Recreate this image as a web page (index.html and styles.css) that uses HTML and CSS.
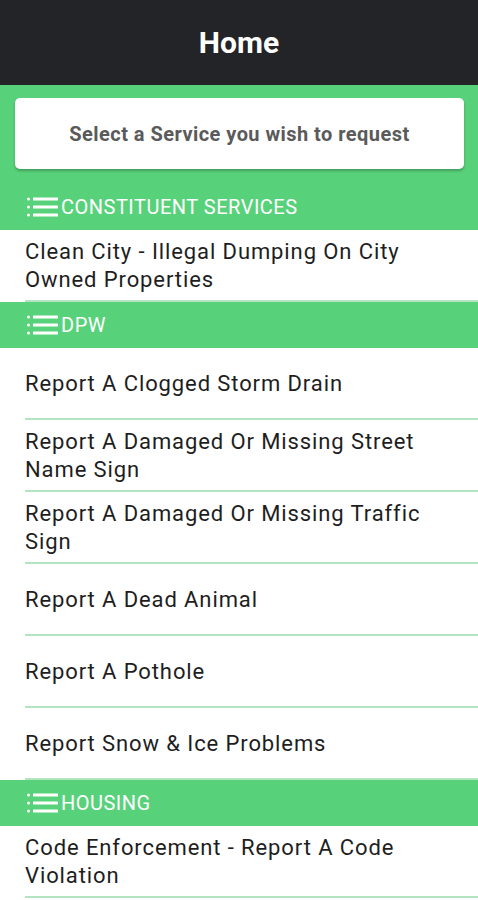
FILE: index.html
```html
<!DOCTYPE html>
<html lang="en">
<head>
  <meta charset="UTF-8">
  <meta name="viewport" content="width=device-width,initial-scale=1.0">
  <title>Home</title>
  <link rel="stylesheet" href="styles.css">
</head>
<body>
  <header class="topbar">Home</header>

  <div class="intro">
    <div class="intro-card">Select a Service you wish to request</div>
  </div>

  <div class="section">
    <div class="section-title">
      <svg class="list-icon" viewBox="0 0 31 20" width="31" height="20">
        <rect x="0" y="0.5" width="3" height="3" rx="1.5"/>
        <rect x="0" y="8.5" width="3" height="3" rx="1.5"/>
        <rect x="0" y="16.5" width="3" height="3" rx="1.5"/>
        <rect x="6" y="0.5" width="25" height="3" rx="0.5"/>
        <rect x="6" y="8.5" width="25" height="3" rx="0.5"/>
        <rect x="6" y="16.5" width="25" height="3" rx="0.5"/>
      </svg>
      <span>CONSTITUENT SERVICES</span>
    </div>
    <div class="item">Clean City - Illegal Dumping On City Owned Properties</div>
  </div>

  <div class="section">
    <div class="section-title">
      <svg class="list-icon" viewBox="0 0 31 20" width="31" height="20">
        <rect x="0" y="0.5" width="3" height="3" rx="1.5"/>
        <rect x="0" y="8.5" width="3" height="3" rx="1.5"/>
        <rect x="0" y="16.5" width="3" height="3" rx="1.5"/>
        <rect x="6" y="0.5" width="25" height="3" rx="0.5"/>
        <rect x="6" y="8.5" width="25" height="3" rx="0.5"/>
        <rect x="6" y="16.5" width="25" height="3" rx="0.5"/>
      </svg>
      <span>DPW</span>
    </div>
    <div class="item">Report A Clogged Storm Drain</div>
    <div class="item">Report A Damaged Or Missing Street Name Sign</div>
    <div class="item">Report A Damaged Or Missing Traffic Sign</div>
    <div class="item">Report A Dead Animal</div>
    <div class="item">Report A Pothole</div>
    <div class="item">Report Snow &amp; Ice Problems</div>
  </div>

  <div class="section">
    <div class="section-title">
      <svg class="list-icon" viewBox="0 0 31 20" width="31" height="20">
        <rect x="0" y="0.5" width="3" height="3" rx="1.5"/>
        <rect x="0" y="8.5" width="3" height="3" rx="1.5"/>
        <rect x="0" y="16.5" width="3" height="3" rx="1.5"/>
        <rect x="6" y="0.5" width="25" height="3" rx="0.5"/>
        <rect x="6" y="8.5" width="25" height="3" rx="0.5"/>
        <rect x="6" y="16.5" width="25" height="3" rx="0.5"/>
      </svg>
      <span>HOUSING</span>
    </div>
    <div class="item">Code Enforcement - Report A Code Violation</div>
  </div>
</body>
</html>
```

FILE: styles.css
```css
body {
  margin: 0;
  font-family: Roboto, "Liberation Sans", Arial, sans-serif;
  background: #fff;
  color: #1e1e1e;
}
.topbar {
  height: 85px;
  background-color: #232428;
  color: #fff;
  font-size: 30px;
  font-weight: bold;
  display: flex;
  align-items: center;
  justify-content: center;
}
.intro {
  background-color: #58d27a;
  padding: 13px 14px 15px 15px;
}
.intro-card {
  height: 71px;
  background-color: #fff;
  border-radius: 5px;
  box-shadow: 0 2px 3px rgba(0,0,0,0.25);
  color: #5a5a5a;
  font-size: 20px;
  font-weight: bold;
  letter-spacing: 0.45px;
  display: flex;
  align-items: center;
  justify-content: center;
}
.section-title {
  height: 46px;
  background-color: #58d27a;
  color: #fff;
  font-size: 20px;
  letter-spacing: 0.5px;
  display: flex;
  align-items: center;
  padding-left: 27px;
}
.list-icon {
  fill: #fff;
  margin-right: 3px;
}
.item {
  margin-left: 25px;
  padding: 8px 20px 6px 0;
  min-height: 56px;
  font-size: 22px;
  letter-spacing: 0.9px;
  line-height: 28px;
  display: flex;
  align-items: center;
  border-bottom: 2px solid #b3e5c1;
}
```
